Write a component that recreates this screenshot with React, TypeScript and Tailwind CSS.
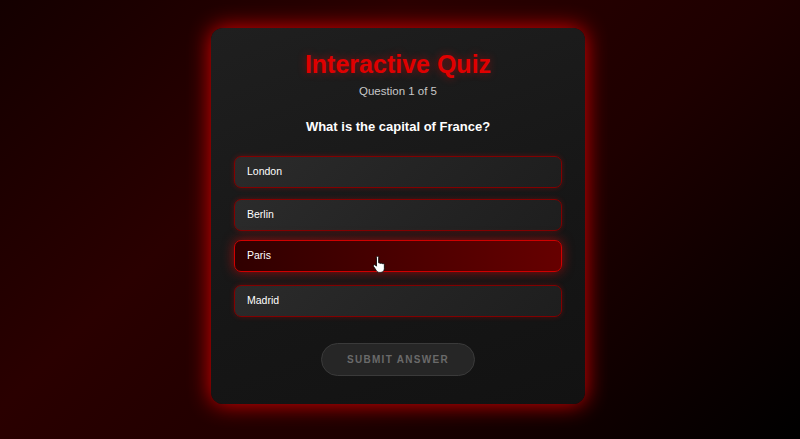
import { useState } from "react";

const QUESTION = {
  text: "What is the capital of France?",
  options: ["London", "Berlin", "Paris", "Madrid"],
};

function HandCursor() {
  return (
    <svg
      width="14"
      height="17"
      viewBox="0 0 16 20"
      className="pointer-events-none absolute left-[137px] top-[15px]"
    >
      <path
        d="M5 1.6c0-.8.6-1.3 1.3-1.3s1.3.5 1.3 1.3V8l.4-.1c.7 0 1.2.4 1.3 1 .3-.4.7-.6 1.2-.6.7 0 1.2.4 1.3 1 .3-.3.7-.5 1.1-.5.8 0 1.4.6 1.4 1.4V15c0 2.5-1.8 4.3-4.3 4.3H8.5c-1.5 0-2.6-.7-3.4-1.8l-3.5-5.2c-.4-.6-.3-1.4.3-1.8.6-.4 1.3-.3 1.8.2L5 12Z"
        fill="#fff"
        stroke="#000"
        strokeWidth="1"
        strokeLinejoin="round"
      />
    </svg>
  );
}

export default function App() {
  const [selected, setSelected] = useState<number | null>(2);

  return (
    <div className="flex h-screen w-full justify-center overflow-hidden bg-[linear-gradient(135deg,#140000_0%,#2a0000_33%,#1e0000_62%,#000_100%)] pr-[4px] pt-[28px] font-['Liberation_Sans',Arial,sans-serif]">
      <div className="flex h-[376px] w-[374px] flex-col items-center rounded-[12px] bg-[linear-gradient(160deg,#1f1f1f_0%,#161616_60%,#121212_100%)] px-[23px] pt-[21px] shadow-[0_0_22px_rgba(255,0,0,0.85)]">
        <h1 className="text-[25px] font-bold leading-[30px] text-[#e00000] [text-shadow:0_0_8px_rgba(255,0,0,0.45)]">
          Interactive Quiz
        </h1>
        <p className="mt-[4px] text-[11.5px] leading-[16px] text-[#c8c8c8]">
          Question 1 of 5
        </p>
        <h2 className="mt-[19px] text-[13px] font-bold leading-[18px] text-white">
          {QUESTION.text}
        </h2>

        <div className="mt-[20px] flex w-full flex-col gap-[11px]">
          {QUESTION.options.map((opt, i) => {
            const active = selected === i;
            return (
              <button
                key={opt}
                onClick={() => setSelected(i)}
                className={`relative flex h-[32px] w-full items-center rounded-[7px] border-[1.5px] px-[12px] text-left text-[10.5px] text-white ${
                  active
                    ? "-translate-y-[2px] border-[#d00000] bg-[linear-gradient(90deg,#300000_0%,#4a0000_50%,#660000_100%)] shadow-[0_0_12px_rgba(255,0,0,0.55)]"
                    : "border-[#820000] bg-[linear-gradient(135deg,#2b2b2b_0%,#232323_60%,#1e1e1e_100%)] shadow-[0_0_5px_rgba(255,0,0,0.25)]"
                }`}
              >
                {opt}
                {active && <HandCursor />}
              </button>
            );
          })}
        </div>

        <button
          disabled
          className="mt-[26px] h-[33px] w-[154px] rounded-full border border-[#3a3a3a] bg-[#262626] text-[10px] font-bold uppercase tracking-[1.3px] text-[#6a6a6a]"
        >
          Submit Answer
        </button>
      </div>
    </div>
  );
}
